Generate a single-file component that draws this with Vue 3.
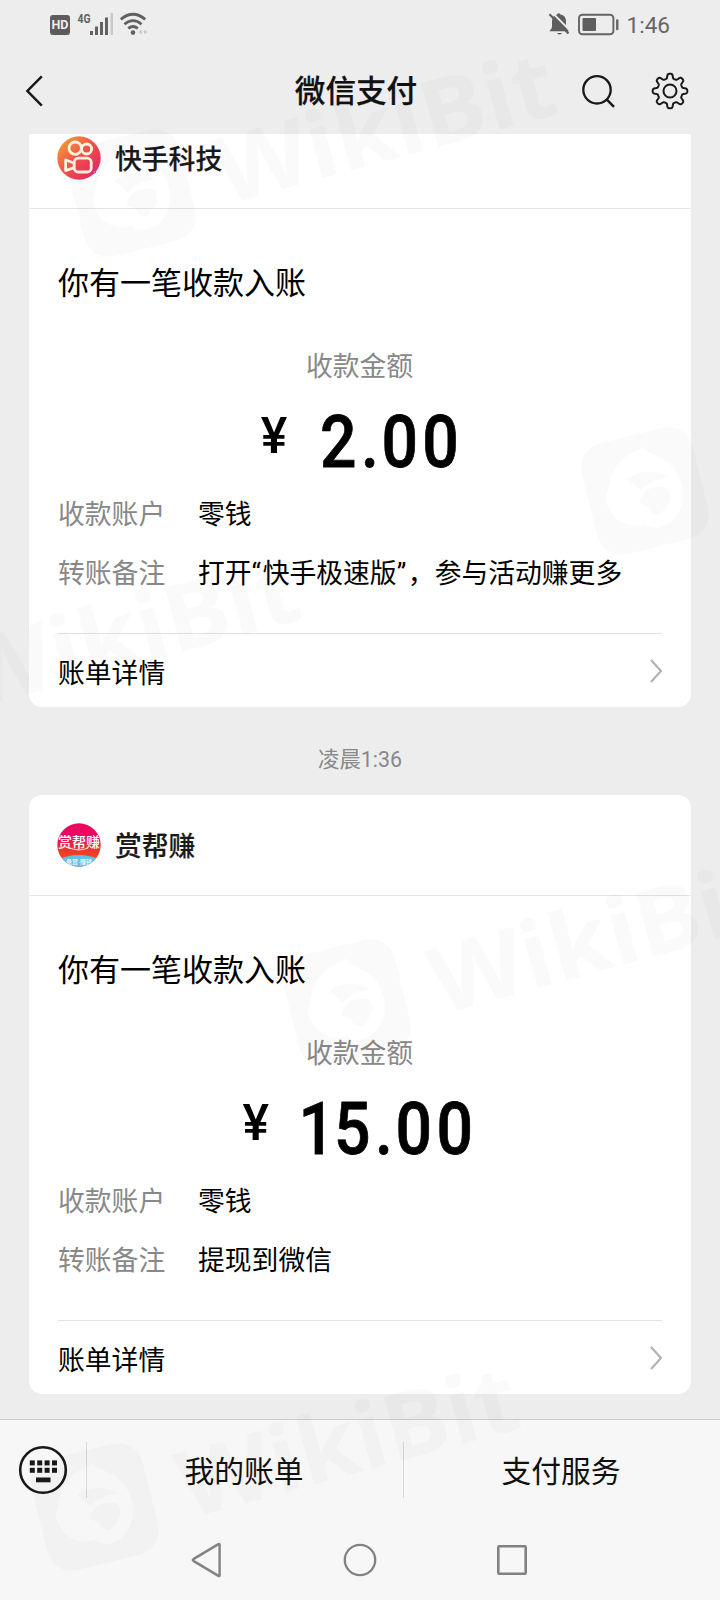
<script setup>
const bills = [
  { id: 'ks', name: '快手科技', amount: '2.00', note: ['打开', '“', '快手极速版', '”', '，参与活动赚更多'], time: '' },
  { id: 'sbz', name: '赏帮赚', amount: '15.00', note: ['提现到微信'], time: '凌晨1:36' },
]

const marks = [
  { x: 132, y: 193 },
  { x: 645, y: 491 },
  { x: -124, y: 698 },
  { x: 347, y: 1003 },
  { x: 95, y: 1507 },
]

// Eight-tooth gear outline in polar form, teeth flattened with tanh
const gear = (() => {
  const pts = []
  for (let i = 0; i < 240; i++) {
    const a = (i / 240) * Math.PI * 2
    const r = 15 + 2.4 * Math.tanh(2.2 * (Math.cos(8 * a) - 0.1))
    pts.push(`${(20 + r * Math.sin(a)).toFixed(2)} ${(20 - r * Math.cos(a)).toFixed(2)}`)
  }
  return `M${pts.join('L')}Z`
})()
</script>

<template>
  <div class="screen">
    <div class="status">
      <svg class="st-left" width="104" height="30" viewBox="0 0 104 30">
        <rect x="4" y="7" width="20" height="20" rx="3" fill="#5c5c5c" />
        <text x="14" y="21.3" text-anchor="middle" font-size="12" font-weight="700" fill="#eee" textLength="17" lengthAdjust="spacingAndGlyphs">HD</text>
        <text x="31.5" y="15" font-size="13.5" font-weight="700" fill="#606060" textLength="13" lengthAdjust="spacingAndGlyphs">4G</text>
        <g fill="#636363">
          <rect x="44" y="23" width="3" height="4" />
          <rect x="49" y="18.5" width="3" height="8.5" />
          <rect x="54" y="14" width="3" height="13" />
          <rect x="59" y="9.5" width="3" height="17.5" />
        </g>
        <rect x="64.5" y="5" width="2.5" height="22" fill="#c9c9c9" />
        <g fill="none" stroke="#606060" stroke-width="2.8">
          <path d="M74.8 11.4Q87 1.2 99.2 11.4" />
          <path d="M78.4 16.2Q87 9 95.6 16.2" />
          <path d="M82.2 20.4Q87 16.6 91.8 20.4" />
        </g>
        <circle cx="87" cy="24.6" r="2.3" fill="#606060" />
        <path d="M93 24l2.6-2.4v4.8zM101 24l-2.6-2.4v4.8z" fill="#c0c0c0" />
      </svg>
      <div class="st-right">
        <svg width="74" height="30" viewBox="0 0 74 30">
          <path d="M4.5 23.3L7 19.5V13Q7.3 7.5 12 6.5Q13.5 4 15.5 6.5Q21 7.5 21 13.5V19L24 23.3Z" fill="#5e5e5e" />
          <path d="M12 25h5q-2.5 3.2-5 0z" fill="#5e5e5e" />
          <path d="M6.5 3.8L25.5 23" stroke="#ededed" stroke-width="1.8" />
          <path d="M4.5 6.2L23.5 25.4" stroke="#5e5e5e" stroke-width="2.2" />
          <rect x="34" y="6.7" width="34.4" height="19.6" rx="3.4" fill="none" stroke="#646464" stroke-width="1.9" />
          <rect x="37.5" y="10" width="13.5" height="13" rx="1" fill="#5e5e5e" />
          <rect x="71" y="11.2" width="2.5" height="11" rx="1" fill="#6a6a6a" />
        </svg>
        <span class="clock">1:46</span>
      </div>
    </div>

    <div class="topbar">
      <svg width="40" height="44" viewBox="0 0 40 44"><path d="M28.8 7.3L14.4 22L28.8 36.7" fill="none" stroke="#191919" stroke-width="2.5" /></svg>
      <span class="title">微信支付</span>
      <div class="actions">
        <svg width="40" height="40" viewBox="0 0 40 40">
          <circle cx="19" cy="18.8" r="13.7" fill="none" stroke="#191919" stroke-width="2.3" />
          <path d="M28.6 28.4L36 35.8" stroke="#191919" stroke-width="2.5" />
        </svg>
        <svg width="40" height="40" viewBox="0 0 40 40">
          <path :d="gear" fill="none" stroke="#191919" stroke-width="2" />
          <circle cx="20" cy="20" r="6.5" fill="none" stroke="#191919" stroke-width="2" />
        </svg>
      </div>
    </div>

    <main class="feed">
      <template v-for="b in bills" :key="b.id">
        <div v-if="b.time" class="time">{{ b.time }}</div>
        <section class="card">
          <header class="head">
            <svg v-if="b.id === 'ks'" width="44" height="44" viewBox="0 0 44 44">
              <defs>
                <linearGradient id="ks-bg" x1="0.1" y1="0.1" x2="0.85" y2="0.85">
                  <stop offset="0" stop-color="#f59a35" />
                  <stop offset="0.45" stop-color="#f4584a" />
                  <stop offset="1" stop-color="#ea2c62" />
                </linearGradient>
              </defs>
              <circle cx="22" cy="22" r="21.7" fill="url(#ks-bg)" />
              <g fill="none" stroke="#fff4df" stroke-width="2.8" stroke-linejoin="round">
                <circle cx="18.2" cy="12.2" r="6.2" />
                <circle cx="29.6" cy="13" r="5" />
                <rect x="17.2" y="22.2" width="17" height="13.8" rx="4" />
                <path d="M17 27L8.6 24V34.6L17 31.6" />
              </g>
              <circle cx="37.5" cy="36" r="1.6" fill="#b55ae0" />
            </svg>
            <svg v-else width="44" height="44" viewBox="0 0 44 44">
              <defs>
                <clipPath id="sbz-clip"><circle cx="22" cy="22" r="21.7" /></clipPath>
                <linearGradient id="sbz-bg" x1="0" y1="0" x2="0" y2="1">
                  <stop offset="0.3" stop-color="#ec0860" />
                  <stop offset="0.62" stop-color="#e8382b" />
                  <stop offset="0.8" stop-color="#ee4c20" />
                </linearGradient>
              </defs>
              <g clip-path="url(#sbz-clip)">
                <rect width="44" height="44" fill="url(#sbz-bg)" />
                <path d="M0 37Q22 27 44 37V44H0Z" fill="#62bfe4" />
                <text x="22" y="24" text-anchor="middle" font-size="14" font-weight="500" fill="#fff" textLength="42">赏帮赚</text>
                <path d="M14 25.5Q22 28.5 31 25" fill="none" stroke="#ffd3b0" stroke-width="1.2" />
                <text x="22" y="41" text-anchor="middle" font-size="6" font-weight="700" fill="#e8f8ff">悬赏·赚钱</text>
              </g>
            </svg>
            <span class="name">{{ b.name }}</span>
          </header>
          <div class="body">
            <div class="headline">你有一笔收款入账</div>
            <div class="caption">收款金额</div>
            <div class="amount">
              <span class="yen">¥</span>
              <span class="num"><span v-for="(ch, i) in b.amount" :key="i" :class="{ one: ch === '1', dot: ch === '.' }">{{ ch }}</span></span>
            </div>
            <dl class="rows">
              <dt>收款账户</dt><dd>零钱</dd>
              <dt>转账备注</dt>
              <dd><span v-for="(part, i) in b.note" :key="i" :class="{ quote: part === '“' || part === '”' }">{{ part }}</span></dd>
            </dl>
            <div class="detail">
              <span>账单详情</span>
              <svg width="14" height="26" viewBox="0 0 14 26"><path d="M3 2L13 13L3 24" fill="none" stroke="#b2b2b2" stroke-width="2.2" /></svg>
            </div>
          </div>
        </section>
      </template>
    </main>

    <footer class="menu">
      <div class="kb">
        <svg width="50" height="50" viewBox="0 0 50 50">
          <circle cx="25" cy="25" r="22.8" fill="none" stroke="#191919" stroke-width="2.6" />
          <g fill="#191919">
            <template v-for="r in 2" :key="r">
              <rect v-for="c in 4" :key="c" :x="4.4 + c * 7.4" :y="8 + r * 7.4" width="5" height="5" />
            </template>
            <rect x="18" y="32.5" width="14.5" height="4.8" />
          </g>
        </svg>
      </div>
      <div class="item">我的账单</div>
      <div class="item">支付服务</div>
    </footer>

    <nav class="sysnav">
      <svg width="36" height="36" viewBox="0 0 36 36"><path d="M29.6 2.8V33.2Q29.6 34.5 28.4 33.9L3.4 18.9Q2.2 18 3.4 17.1L28.4 2.1Q29.6 1.5 29.6 2.8Z" fill="none" stroke="#828282" stroke-width="2.4" /></svg>
      <svg width="36" height="36" viewBox="0 0 36 36"><circle cx="18" cy="18" r="15.2" fill="none" stroke="#828282" stroke-width="2.3" /></svg>
      <svg width="36" height="36" viewBox="0 0 36 36"><rect x="4.3" y="4.3" width="27.4" height="27.4" rx="0.8" fill="none" stroke="#828282" stroke-width="2.6" /></svg>
    </nav>

    <svg class="marks" width="720" height="1600" viewBox="0 0 720 1600">
      <g v-for="(m, i) in marks" :key="i" :transform="`translate(${m.x} ${m.y}) rotate(-14)`">
        <path fill-rule="evenodd" d="M-28 -57H28Q57 -57 57 -28V28Q57 57 28 57H-28Q-57 57 -57 28V-28Q-57 -57 -28 -57ZM-30 -22C-16 -42 2 -40 10 -44C8 -38 16 -36 24 -28C42 -12 42 20 22 34C10 42 -4 40 -8 32C-24 34 -42 20 -40 -2C-38 -8 -34 -12 -30 -22ZM-8 10Q2 -8 22 2Q28 16 8 26Q0 24 0 16ZM-14 -16Q6 -24 26 -8Q8 -10 -4 -2Z" />
        <text x="88" y="34" transform="rotate(-1.3 88 34)" font-size="92" font-weight="700" textLength="348" lengthAdjust="spacingAndGlyphs">WikiBit</text>
      </g>
    </svg>
  </div>
</template>

<style>
body {
  background: #ededed;
}
</style>

<style scoped>
.screen {
  position: relative;
  display: flex;
  flex-direction: column;
  width: 720px;
  height: 1600px;
  overflow: hidden;
  background: #ededed;
  color: #000;
  font-family: Roboto, "Noto Sans CJK SC", sans-serif;
}
svg {
  display: block;
  flex: none;
}
.status {
  display: flex;
  justify-content: space-between;
  height: 48px;
  padding: 8px 50px 0 46px;
  box-sizing: border-box;
}
.st-right {
  display: flex;
  gap: 8px;
}
.clock {
  font-size: 22.5px;
  line-height: 34px;
  color: #666;
}
.topbar {
  display: grid;
  grid-template-columns: 1fr auto 1fr;
  align-items: center;
  height: 86px;
  padding: 0 30px 0 13px;
  box-sizing: border-box;
}
.title {
  margin-left: 9px;
  padding-top: 2px;
  font-size: 30.6px;
  font-weight: 500;
  line-height: 44px;
  color: #111;
  -webkit-text-stroke: 0.25px #111;
}
.actions {
  display: flex;
  justify-content: flex-end;
  gap: 32px;
}
.feed {
  flex: 1;
  min-height: 0;
  overflow: hidden;
  padding: 0 29px;
}
.card {
  height: 599px;
  border-radius: 13px;
  background: #fff;
}
.card:first-child {
  margin-top: -26px;
}
.head {
  display: flex;
  align-items: center;
  gap: 14px;
  height: 101px;
  padding: 0 0 0 28px;
  border-bottom: 1px solid #e3e3e3;
  box-sizing: border-box;
}
.name {
  padding-top: 4px;
  font-size: 26.8px;
  font-weight: 500;
  line-height: 36px;
  color: #191919;
  -webkit-text-stroke: 0.2px #191919;
}
.body {
  padding: 55px 29px 0;
}
.headline {
  font-size: 31px;
  line-height: 40px;
}
.caption {
  margin: 45px 1px 0 0;
  font-size: 26.8px;
  line-height: 36px;
  text-align: center;
  color: #888;
}
.amount {
  display: flex;
  justify-content: center;
  margin: 21px 0 19px;
  font-weight: 500;
  line-height: 72px;
}
.yen {
  margin-right: 33px;
  padding-bottom: 12px;
  font-size: 50px;
  line-height: 60px;
}
.num {
  display: flex;
  margin: 0 -24px 0 0;
  font-size: 73px;
  letter-spacing: 5px;
  transform: scaleX(0.88);
  transform-origin: left center;
  -webkit-text-stroke: 0.8px #000;
}
.num .one {
  margin: 0 -6px 0 -4px;
}
.num .dot {
  margin-right: -2px;
}
.rows {
  display: grid;
  grid-template-columns: 140px 1fr;
  row-gap: 23px;
  margin: 0;
  font-size: 26.8px;
  line-height: 36px;
}
dt {
  color: #888;
}
dd {
  margin: 0;
  white-space: nowrap;
}
.quote {
  letter-spacing: 1.6px;
}
.detail {
  display: flex;
  align-items: center;
  justify-content: space-between;
  height: 75px;
  margin-top: 41px;
  border-top: 1px solid #e3e3e3;
  box-sizing: border-box;
  font-size: 26.8px;
}
.time {
  height: 88px;
  padding-top: 38px;
  box-sizing: border-box;
  font-size: 21.4px;
  line-height: 30px;
  text-align: center;
  color: #888;
}
.menu {
  display: flex;
  align-items: center;
  height: 101px;
  border-top: 1px solid #cdcdcd;
  box-sizing: border-box;
  background: #f7f7f7;
}
.kb {
  width: 86px;
  padding-left: 18px;
  box-sizing: border-box;
}
.item {
  flex: 1;
  height: 56px;
  padding-right: 2px;
  border-left: 1px solid #d8d8d8;
  box-sizing: border-box;
  font-size: 29.8px;
  line-height: 60px;
  text-align: center;
  color: #111;
}
.sysnav {
  display: flex;
  justify-content: center;
  gap: 116px;
  height: 80px;
  padding-top: 22px;
  box-sizing: border-box;
  background: #f7f7f7;
}
.marks {
  position: absolute;
  top: 0;
  left: 0;
  fill: #000;
  opacity: 0.017;
  font-family: "Open Sans", sans-serif;
  pointer-events: none;
}
</style>
